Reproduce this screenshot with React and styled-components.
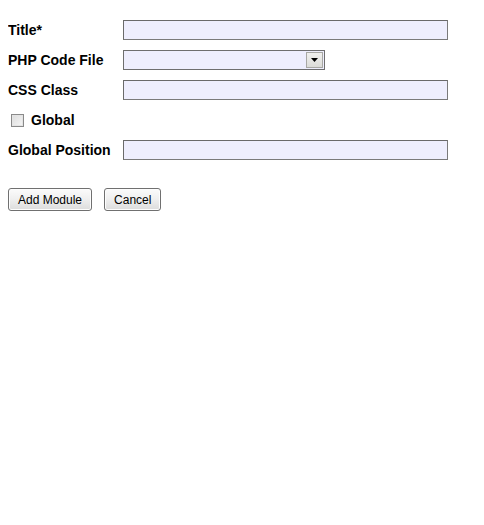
import React from "react";
import styled, { createGlobalStyle } from "styled-components";

const GlobalStyle = createGlobalStyle`
body {
  margin: 8px;
  background: #fff;
  font-family: "Liberation Sans", Arial, sans-serif;
  color: #000;
}
`;

const Form = styled.form`
padding-top: 12px;
`;

const Grid = styled.div`
display: grid;
grid-template-columns: 115px 325px;
grid-auto-rows: 20px;
row-gap: 10px;
align-items: center;
`;

const Label = styled.label`
font-size: 14px;
font-weight: bold;
line-height: 20px;
white-space: nowrap;
`;

const TextInput = styled.input`
box-sizing: border-box;
width: 325px;
height: 20px;
margin: 0;
padding: 1px 3px;
background: #eeeefd;
border: 1px solid #7a7a7a;
border-top-color: #6a6a6a;
border-left-color: #6a6a6a;
font-family: inherit;
font-size: 13px;
outline: none;
`;

const SelectBox = styled.div`
box-sizing: border-box;
width: 202px;
height: 20px;
display: flex;
align-items: stretch;
background: #eeeefd;
border: 1px solid #6e6e6e;
`;

const Select = styled.select`
flex: 1;
min-width: 0;
appearance: none;
border: none;
background: transparent;
margin: 0;
padding: 0 3px;
font-family: inherit;
font-size: 13px;
outline: none;
`;

const Arrow = styled.span`
box-sizing: border-box;
width: 17px;
margin: 1px;
display: flex;
align-items: center;
justify-content: center;
background: linear-gradient(#f0f0ee, #dcdcd8);
border: 1px solid #a8a8a4;
`;

const CheckRow = styled.div`
grid-column: 1 / 3;
display: flex;
align-items: center;
gap: 7px;
padding-left: 3px;
`;

const Box = styled.span`
box-sizing: border-box;
width: 13px;
height: 13px;
border: 1px solid #8a8a8a;
background: linear-gradient(135deg, #dcdcdc, #f6f6f6);
box-shadow: inset 0 0 0 1px #e4e4e4;
`;

const Buttons = styled.div`
display: flex;
gap: 12px;
margin-top: 28px;
`;

const Button = styled.button`
box-sizing: border-box;
height: 23px;
padding: 0 9px;
margin: 0;
font-family: inherit;
font-size: 12px;
color: #000;
background: linear-gradient(#fbfbfb 0%, #f0f0f0 45%, #dcdcdc 100%);
border: 1px solid #707070;
border-radius: 3px;
box-shadow: inset 0 0 0 1px #fdfdfd;
`;

const App = () => (
  <>
    <GlobalStyle />
    <Form onSubmit={e => e.preventDefault()}>
      <Grid>
        <Label>Title*</Label>
        <TextInput />
        <Label>PHP Code File</Label>
        <SelectBox>
          <Select defaultValue="">
            <option value=""></option>
          </Select>
          <Arrow>
            <svg width="7" height="4" viewBox="0 0 7 4">
              <path d="M0 0h7L3.5 4z" fill="#000" />
            </svg>
          </Arrow>
        </SelectBox>
        <Label>CSS Class</Label>
        <TextInput />
        <CheckRow>
          <Box />
          <Label>Global</Label>
        </CheckRow>
        <Label>Global Position</Label>
        <TextInput />
      </Grid>
      <Buttons>
        <Button>Add Module</Button>
        <Button>Cancel</Button>
      </Buttons>
    </Form>
  </>
);

export default App;
